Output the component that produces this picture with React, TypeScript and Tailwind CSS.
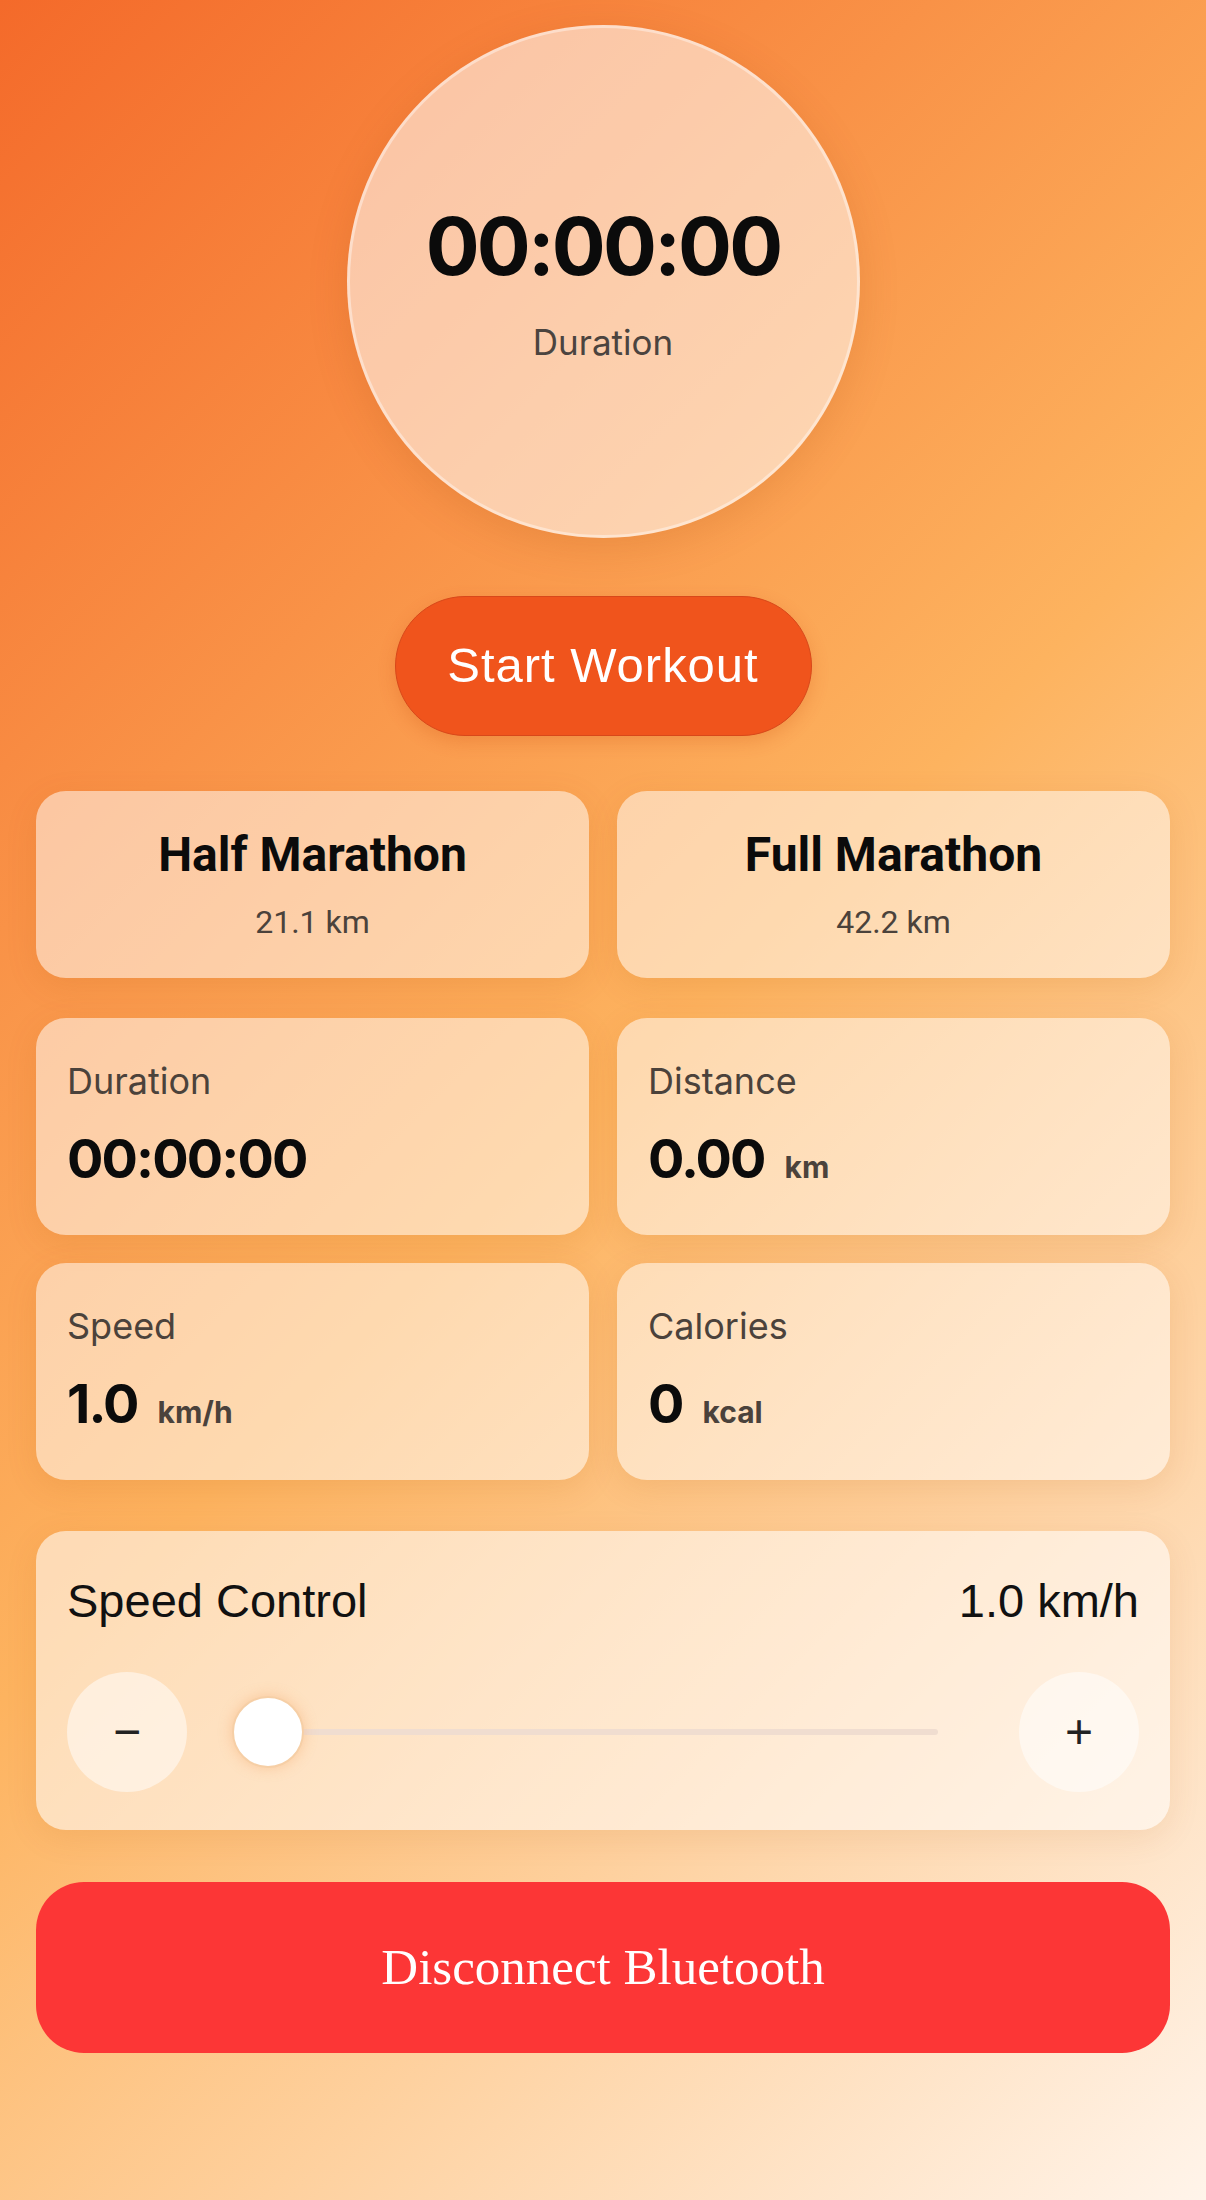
import React from 'react'

const inter = "font-['Inter','Noto_Sans',sans-serif]"
const roboto = "font-['Roboto','Noto_Sans',sans-serif]"
const helv = "font-['Liberation_Sans','Arial',sans-serif]"

function StatCard({ label, value, unit }: { label: string; value: string; unit?: string }) {
  return (
    <div className="h-[217px] rounded-[30px] bg-white/50 px-[31px] pt-[36px] shadow-[0_8px_32px_rgba(170,80,0,0.12)]">
      <div className={`${inter} text-[36px] leading-[54px] text-[#4b423b]`}>{label}</div>
      <div className="mt-[10px] flex items-baseline">
        <span className={`${inter} text-[54px] leading-[81px] font-bold tracking-[-0.035em] text-[#0b0b0b]`}>{value}</span>
        {unit && <span className={`${inter} ml-[20px] text-[30px] font-bold text-[#4b423b]`}>{unit}</span>}
      </div>
    </div>
  )
}

export default function App() {
  return (
    <div className="min-h-screen w-full bg-[linear-gradient(135deg,#f46a2a_0%,#fdb35f_50%,#fff4ea_100%)] px-[36px] pt-[25px] flex flex-col items-center">
      {/* timer dial */}
      <div className="w-[513px] h-[513px] rounded-full bg-white/55 border-[3px] border-white/40 shadow-[0_10px_40px_rgba(150,60,0,0.15)] flex flex-col items-center justify-center">
        <div className={`${inter} text-[80px] leading-[96px] font-bold tracking-[-0.035em] text-[#0b0b0b] mt-[2px]`}>00:00:00</div>
        <div className={`${inter} text-[35px] leading-[52px] text-[#4b443f] mt-[22px]`}>Duration</div>
      </div>

      <button className={`${helv} mt-[58px] w-[417px] h-[140px] rounded-full bg-[#f0541c] border border-[#d8481a] text-white text-[49px] tracking-[0.02em] shadow-[0_6px_18px_rgba(200,60,0,0.2)]`}>
        Start Workout
      </button>

      <div className="mt-[55px] grid w-full grid-cols-2 gap-[28px]">
        {[
          { title: 'Half Marathon', dist: '21.1 km' },
          { title: 'Full Marathon', dist: '42.2 km' },
        ].map(m => (
          <div key={m.title} className="h-[187px] rounded-[30px] bg-white/50 pt-[28px] text-center shadow-[0_8px_32px_rgba(170,80,0,0.12)]">
            <div className={`${roboto} text-[48px] leading-[72px] font-bold text-[#0b0b0b]`}>{m.title}</div>
            <div className={`${roboto} mt-[4px] text-[32px] leading-[54px] text-[#4b423b]`}>{m.dist}</div>
          </div>
        ))}
      </div>

      <div className="mt-[40px] grid w-full grid-cols-2 gap-[28px]">
        <StatCard label="Duration" value="00:00:00" />
        <StatCard label="Distance" value="0.00" unit="km" />
        <StatCard label="Speed" value="1.0" unit="km/h" />
        <StatCard label="Calories" value="0" unit="kcal" />
      </div>

      {/* speed control */}
      <div className="mt-[51px] w-full h-[299px] rounded-[30px] bg-white/55 px-[31px] pt-[35px] shadow-[0_8px_32px_rgba(170,80,0,0.1)]">
        <div className={`${helv} flex items-baseline justify-between text-[47px] leading-[70px] text-[#111]`}>
          <span>Speed Control</span>
          <span>1.0 km/h</span>
        </div>
        <div className="mt-[36px] flex h-[120px] items-center">
          <div className={`${helv} flex h-[120px] w-[120px] items-center justify-center rounded-full bg-white/50 text-[48px] text-[#222]`}>−</div>
          <div className="relative ml-[45px] mr-[81px] flex h-[72px] flex-1 items-center">
            <div className="absolute left-0 right-0 h-[6px] rounded-full bg-[#f0ddd0]" />
            <div className="relative h-[72px] w-[72px] rounded-full border-2 border-[#f6cfa6] bg-white shadow-[0_0_14px_rgba(240,150,80,0.35)]" />
          </div>
          <div className={`${helv} flex h-[120px] w-[120px] items-center justify-center rounded-full bg-white/50 text-[48px] text-[#222]`}>+</div>
        </div>
      </div>

      <button className="mt-[52px] w-full h-[171px] rounded-[48px] bg-[#fc3636] text-white text-[51px] font-['Liberation_Serif','Times_New_Roman',serif]">
        Disconnect Bluetooth
      </button>
    </div>
  )
}
